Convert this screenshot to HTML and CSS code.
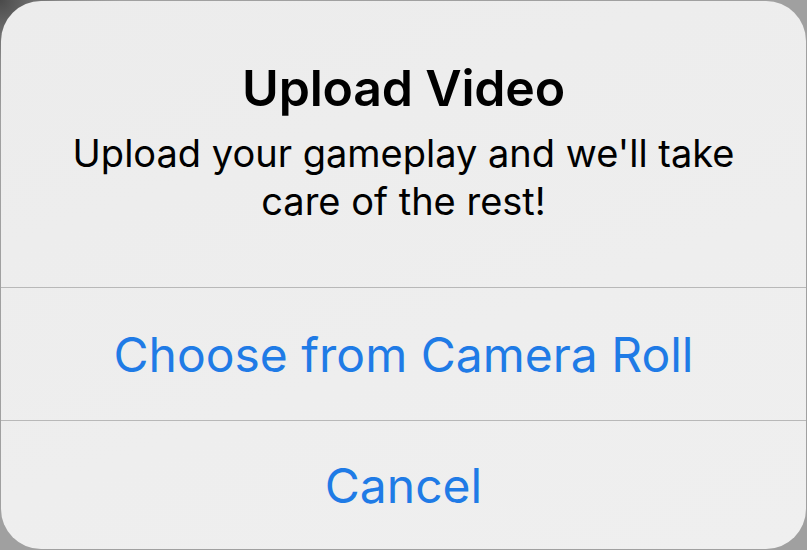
FILE: index.html
```html
<!DOCTYPE html>
<html>
<head>
<meta charset="utf-8">
<link rel="stylesheet" href="styles.css">
</head>
<body>
<div class="alert">
  <div class="alert-header">
    <h1 class="alert-title">Upload Video</h1>
    <p class="alert-message">Upload your gameplay and we'll take<br>care of the rest!</p>
  </div>
  <div class="alert-action">Choose from Camera Roll</div>
  <div class="alert-action">Cancel</div>
</div>
</body>
</html>
```
FILE: styles.css
```css
html, body {
  margin: 0;
  padding: 0;
}
body {
  width: 807px;
  height: 550px;
  background: radial-gradient(circle at 0 0, #4a4a4a 0, #8a8a8a 60px, #a0a0a0 120px);
  overflow: hidden;
  font-family: Inter, "Noto Sans", sans-serif;
}
.alert {
  margin: 1px 1px 0 1px;
  height: 548px;
  background: linear-gradient(160deg, #ececec 0%, #eeeeee 60%, #efefef 100%);
  border-radius: 40px;
  display: flex;
  flex-direction: column;
  overflow: hidden;
}
.alert-header {
  height: 287px;
  border-bottom: 1px solid #b8b8b8;
  display: flex;
  flex-direction: column;
  align-items: center;
  box-sizing: border-box;
  padding-top: 59px;
}
.alert-title {
  margin: 0;
  font-size: 50px;
  font-weight: 600;
  line-height: 56px;
  color: #000;
  letter-spacing: -0.2px;
}
.alert-message {
  margin: 13px 0 0 0;
  font-size: 38px;
  font-weight: 400;
  line-height: 48px;
  text-align: center;
  color: #000;
}
.alert-action {
  height: 132px;
  display: flex;
  align-items: center;
  justify-content: center;
  font-size: 48px;
  color: #1f7be6;
  border-bottom: 1px solid #b8b8b8;
}
.alert-action:last-child {
  border-bottom: none;
  flex: 1;
}
```
